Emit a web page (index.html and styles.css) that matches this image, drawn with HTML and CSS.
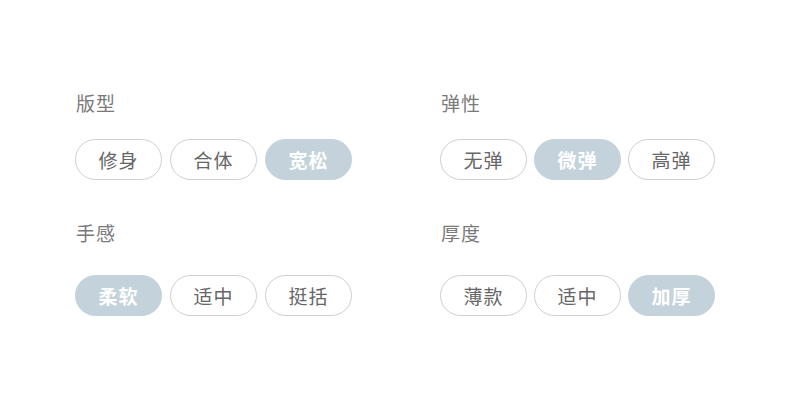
FILE: index.html
```html
<!DOCTYPE html>
<html lang="zh">
<head>
<meta charset="utf-8">
<link rel="stylesheet" href="styles.css">
</head>
<body>
<div class="board">
  <section class="group">
    <div class="label">版型</div>
    <div class="pills">
      <span class="pill">修身</span>
      <span class="pill">合体</span>
      <span class="pill active">宽松</span>
    </div>
  </section>
  <section class="group right">
    <div class="label">弹性</div>
    <div class="pills">
      <span class="pill">无弹</span>
      <span class="pill active">微弹</span>
      <span class="pill">高弹</span>
    </div>
  </section>
  <section class="group lower">
    <div class="label">手感</div>
    <div class="pills">
      <span class="pill active">柔软</span>
      <span class="pill">适中</span>
      <span class="pill">挺括</span>
    </div>
  </section>
  <section class="group lower right">
    <div class="label">厚度</div>
    <div class="pills">
      <span class="pill">薄款</span>
      <span class="pill">适中</span>
      <span class="pill active">加厚</span>
    </div>
  </section>
</div>
</body>
</html>
```
FILE: styles.css
```css
html, body {
  margin: 0;
  padding: 0;
  background: #ffffff;
}
body {
  width: 790px;
  height: 412px;
  font-family: "Noto Sans CJK SC", "Noto Sans", sans-serif;
}
.board {
  display: grid;
  grid-template-columns: 365px 300px;
  padding: 93px 0 0 75px;
  row-gap: 43px;
}
.label {
  font-size: 19px;
  line-height: 20px;
  height: 20px;
  color: #7a7a7a;
  letter-spacing: 1px;
  padding-left: 1px;
}
.pills {
  display: flex;
  gap: 8px;
  margin-top: 26px;
}
.right .pills {
  gap: 7px;
}
.lower .pills {
  margin-top: 32px;
}
.pill {
  box-sizing: border-box;
  width: 87px;
  height: 41px;
  border: 1px solid #cfcfcf;
  border-radius: 21px;
  display: flex;
  align-items: center;
  justify-content: center;
  font-size: 19px;
  letter-spacing: 1px;
  color: #666666;
}
.pill.active {
  background: #c4d3db;
  border-color: #c4d3db;
  color: #ffffff;
  font-weight: 700;
}
```
